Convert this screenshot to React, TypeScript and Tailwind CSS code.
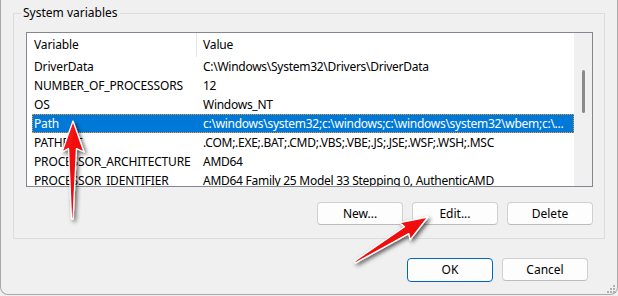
import React from 'react';

const rows = [
  { name: 'DriverData', value: 'C:\\Windows\\System32\\Drivers\\DriverData' },
  { name: 'NUMBER_OF_PROCESSORS', value: '12' },
  { name: 'OS', value: 'Windows_NT' },
  { name: 'Path', value: 'c:\\windows\\system32;c:\\windows;c:\\windows\\system32\\wbem;c:\\...', selected: true },
  { name: 'PATHEXT', value: '.COM;.EXE;.BAT;.CMD;.VBS;.VBE;.JS;.JSE;.WSF;.WSH;.MSC' },
  { name: 'PROCESSOR_ARCHITECTURE', value: 'AMD64' },
  { name: 'PROCESSOR_IDENTIFIER', value: 'AMD64 Family 25 Model 33 Stepping 0, AuthenticAMD' },
];

function Button({ label, primary }: { label: string; primary?: boolean }) {
  return (
    <button
      className={
        primary
          ? 'w-[86px] h-[24px] rounded-[4px] border border-[#0067c0] bg-[#fdfdfd] text-[12px] text-black'
          : 'w-[86px] h-[23px] rounded-[4px] border border-[#d0d0d0] border-b-[#bcbcbc] bg-[#fdfdfd] text-[12px] text-black'
      }
    >
      {label}
    </button>
  );
}

function Arrows() {
  return (
    <svg className="absolute inset-0 pointer-events-none" width="618" height="296" viewBox="0 0 618 296">
      <defs>
        <filter id="sh" x="-50%" y="-50%" width="200%" height="200%">
          <feDropShadow dx="2" dy="2" stdDeviation="2" floodColor="#000" floodOpacity="0.65" />
        </filter>
        <linearGradient id="rd" x1="0" y1="0" x2="1" y2="1">
          <stop offset="0" stopColor="#ff1a1a" />
          <stop offset="1" stopColor="#e00000" />
        </linearGradient>
      </defs>
      <path
        d="M73 121 L84 152 L76.5 148.5 L73 219 L71.5 219 L68.5 148.5 L62 152 Z"
        fill="url(#rd)"
        stroke="#fff"
        strokeWidth="1.3"
        strokeLinejoin="round"
        filter="url(#sh)"
      />
      <path
        d="M428 217 L410.2 239.7 L408.8 233.6 L355.5 262.9 L354.5 261.1 L404.6 226.8 L399.8 222.7 Z"
        fill="url(#rd)"
        stroke="#fff"
        strokeWidth="1.3"
        strokeLinejoin="round"
        filter="url(#sh)"
      />
    </svg>
  );
}

export default function App() {
  return (
    <div className="relative w-[618px] h-[296px] bg-[#f0f0f0] overflow-hidden text-black" style={{ fontFamily: '"Noto Sans", sans-serif' }}>
      <div className="h-[295px] border-l border-r border-b border-[#a9a9a9] rounded-b-[8px] flex flex-col">
        {/* System variables group */}
        <div className="relative mt-[13px] ml-[12px] w-[592px] h-[226px] border border-[#dcdcdc] flex flex-col">
          <span className="absolute left-[7px] top-[-9px] px-[2px] bg-[#f0f0f0] text-[12px] leading-[16px]">
            System variables
          </span>

          <div className="ml-[12px] mt-[18px] w-[567px] h-[155px] border border-[#828790] bg-white flex overflow-hidden">
            <div className="w-[547px] flex flex-col tracking-[-0.15px]">
              <div className="h-[24px] flex items-center text-[12px] shrink-0">
                <div className="w-[170px] pl-[7px] h-full flex items-center border-r border-[#e5e5e5]">Variable</div>
                <div className="pl-[6px]">Value</div>
              </div>
              {rows.map((r) => (
                <div key={r.name} className="h-[19px] pl-[5px] flex shrink-0">
                  <div
                    className={
                      r.selected
                        ? 'flex-1 flex items-center text-[12px] bg-[#0078d7] text-white outline-1 outline-dotted outline-[#f59a2a] -outline-offset-1 overflow-hidden'
                        : 'flex-1 flex items-center text-[12px] overflow-hidden'
                    }
                  >
                    <div className="w-[171px] shrink-0 pl-[2px] whitespace-nowrap">{r.name}</div>
                    <div className="whitespace-nowrap tracking-[-0.27px]">{r.value}</div>
                  </div>
                </div>
              ))}
            </div>
            <div className="w-[18px] bg-[#f0f0f0] flex flex-col">
              <div className="ml-[8px] mt-[37px] w-[3px] h-[43px] rounded-full bg-[#8a8a8a]" />
            </div>
          </div>

          <div className="mt-[15px] pr-[11px] flex justify-end gap-[9px]">
            <Button label="New..." />
            <Button label="Edit..." />
            <Button label="Delete" />
          </div>
        </div>

        <div className="mt-[19px] pr-[29px] flex justify-end gap-[9px]">
          <Button label="OK" primary />
          <Button label="Cancel" />
        </div>
      </div>

      <svg className="absolute right-[3px] bottom-[3px]" width="8" height="8" viewBox="0 0 8 8">
        <rect x="6" y="0" width="2" height="2" fill="#b0b0b0" />
        <rect x="3" y="3" width="2" height="2" fill="#b0b0b0" />
        <rect x="6" y="3" width="2" height="2" fill="#b0b0b0" />
        <rect x="0" y="6" width="2" height="2" fill="#b0b0b0" />
        <rect x="3" y="6" width="2" height="2" fill="#b0b0b0" />
        <rect x="6" y="6" width="2" height="2" fill="#b0b0b0" />
      </svg>

      <Arrows />
    </div>
  );
}
